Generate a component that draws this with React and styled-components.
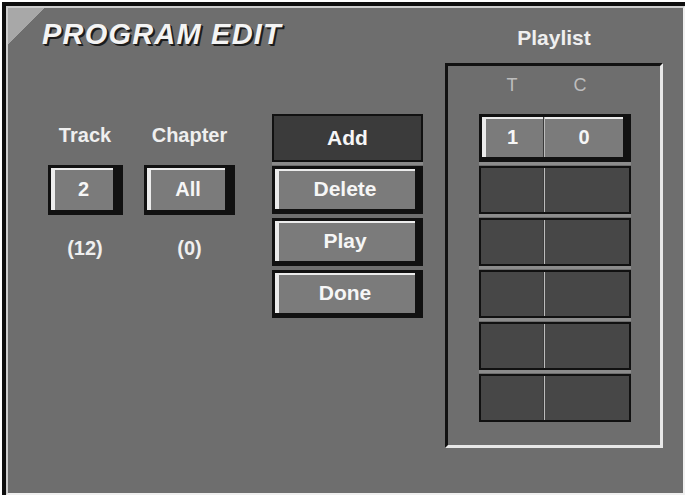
import React from 'react';
import styled, { createGlobalStyle } from 'styled-components';

const GlobalStyle = createGlobalStyle`
  html, body {
    margin: 0;
    padding: 0;
    background: #fff;
  }
  body {
    font-family: "Liberation Sans", Arial, sans-serif;
  }
  * {
    box-sizing: border-box;
  }
`;

const Frame = styled.div`
  width: 683px;
  height: 493px;
  margin: 2px 0 0 2px;
  border-top: 4px solid #0e0e0e;
  border-left: 4px solid #0e0e0e;
`;

const Screen = styled.div`
  position: relative;
  height: 100%;
  background: #6e6e6e;
  border: 2px solid #f0f0f0;
  border-top-color: #cdcdcd;
  border-left-color: #cdcdcd;
  display: grid;
  grid-template-columns: 437px 218px;
  align-items: start;

  &::before {
    content: '';
    position: absolute;
    top: 0;
    left: 0;
    width: 36px;
    height: 36px;
    background: linear-gradient(135deg, #a8a8a8 50%, transparent 50%);
  }
`;

const LeftArea = styled.div`
  display: flex;
  flex-direction: column;
`;

const Title = styled.h1`
  position: relative;
  margin: 10px 0 0 34px;
  font-size: 29px;
  line-height: 33px;
  font-style: italic;
  font-weight: bold;
  letter-spacing: 1.2px;
  color: #f4f4f4;
  text-shadow: 2px 2px 0 #1c1c1c, 1px 1px 0 #2a2a2a;
`;

const Controls = styled.div`
  display: flex;
  margin-top: 63px;
  padding-left: 32px;
`;

const FieldGroup = styled.div`
  width: ${p => p.$width}px;
  margin-right: ${p => p.$gap || 0}px;
  display: flex;
  flex-direction: column;
  align-items: center;
  padding-top: 9px;
`;

const Label = styled.div`
  font-size: 20px;
  font-weight: bold;
  line-height: 24px;
  color: #efefef;
`;

const ValueBox = styled.div`
  width: ${p => p.$width}px;
  height: 50px;
  margin-top: 18px;
  padding-left: 4px;
  background: #7b7b7b;
  border: 3px solid #111;
  border-right-width: 10px;
  border-bottom-width: 5px;
  box-shadow: inset 4px 0 0 #ececec, inset 0 2px 0 #ececec;
  display: flex;
  align-items: center;
  justify-content: center;
  font-size: 20px;
  font-weight: bold;
  color: #f6f6f6;
`;

const Count = styled.div`
  margin-top: 21px;
  font-size: 20px;
  font-weight: bold;
  line-height: 24px;
  color: #efefef;
`;

const ButtonStack = styled.div`
  display: flex;
  flex-direction: column;
  gap: 4px;
`;

const Button = styled.div`
  width: 151px;
  height: 48px;
  display: flex;
  align-items: center;
  justify-content: center;
  font-size: 21px;
  font-weight: bold;
  color: #f6f6f6;
  background: ${p => (p.$dark ? '#3b3b3b' : '#7b7b7b')};
  border: ${p => (p.$dark ? '2px' : '3px')} solid #111;
  border-right-width: ${p => (p.$dark ? '2px' : '8px')};
  border-bottom-width: ${p => (p.$dark ? '2px' : '5px')};
  box-shadow: ${p =>
    p.$dark ? '0 3px 0 #8a8a8a' : 'inset 4px 0 0 #ececec, inset 0 2px 0 #ececec'};
`;

const RightArea = styled.div`
  padding-top: 18px;
  display: flex;
  flex-direction: column;
`;

const PlaylistLabel = styled.div`
  text-align: center;
  font-size: 21px;
  font-weight: bold;
  line-height: 24px;
  color: #efefef;
`;

const Panel = styled.div`
  margin-top: 13px;
  height: 385px;
  border: 3px solid #e8e8e8;
  border-top-color: #111;
  border-left-color: #111;
  padding: 8px 0 0 31px;
`;

const HeaderRow = styled.div`
  display: grid;
  grid-template-columns: 66px 70px;
  font-size: 18px;
  line-height: 22px;
  color: #bdbdbd;
  text-align: center;
`;

const RowList = styled.div`
  margin-top: 18px;
  display: flex;
  flex-direction: column;
  gap: 4px;
`;

const PlayRow = styled.div`
  width: 152px;
  height: 48px;
  display: grid;
  grid-template-columns: ${p => (p.$active ? '61px' : '62px')} 2px 1fr;
  background: ${p => (p.$active ? '#7b7b7b' : '#474747')};
  border: ${p => (p.$active ? '3px' : '2px')} solid #111;
  border-right-width: ${p => (p.$active ? '8px' : '2px')};
  border-bottom-width: ${p => (p.$active ? '5px' : '2px')};
  box-shadow: ${p =>
    p.$active ? 'inset 4px 0 0 #ececec, inset 0 2px 0 #ececec' : 'none'};

  &:not(:last-child) {
    box-shadow: ${p =>
      p.$active
        ? 'inset 4px 0 0 #ececec, inset 0 2px 0 #ececec, 0 3px 0 #8c8c8c'
        : '0 3px 0 #8c8c8c'};
  }
`;

const Cell = styled.div`
  display: flex;
  align-items: center;
  justify-content: center;
  font-size: 20px;
  font-weight: bold;
  color: #f6f6f6;
`;

const Divider = styled.div`
  background: #bcbcbc;
  border-left: 1px solid #3a3a3a;
`;

const playlist = [
  { t: '1', c: '0' },
  null,
  null,
  null,
  null,
  null,
];

export default function App() {
  return (
    <>
      <GlobalStyle />
      <Frame>
        <Screen>
          <LeftArea>
            <Title>PROGRAM EDIT</Title>
            <Controls>
              <FieldGroup $width={90} $gap={10}>
                <Label>Track</Label>
                <ValueBox $width={75}>2</ValueBox>
                <Count>(12)</Count>
              </FieldGroup>
              <FieldGroup $width={99} $gap={33}>
                <Label>Chapter</Label>
                <ValueBox $width={91}>All</ValueBox>
                <Count>(0)</Count>
              </FieldGroup>
              <ButtonStack>
                <Button $dark>Add</Button>
                <Button>Delete</Button>
                <Button>Play</Button>
                <Button>Done</Button>
              </ButtonStack>
            </Controls>
          </LeftArea>
          <RightArea>
            <PlaylistLabel>Playlist</PlaylistLabel>
            <Panel>
              <HeaderRow>
                <span>T</span>
                <span>C</span>
              </HeaderRow>
              <RowList>
                {playlist.map((item, i) => (
                  <PlayRow key={i} $active={!!item}>
                    <Cell>{item ? item.t : ''}</Cell>
                    <Divider />
                    <Cell>{item ? item.c : ''}</Cell>
                  </PlayRow>
                ))}
              </RowList>
            </Panel>
          </RightArea>
        </Screen>
      </Frame>
    </>
  );
}
